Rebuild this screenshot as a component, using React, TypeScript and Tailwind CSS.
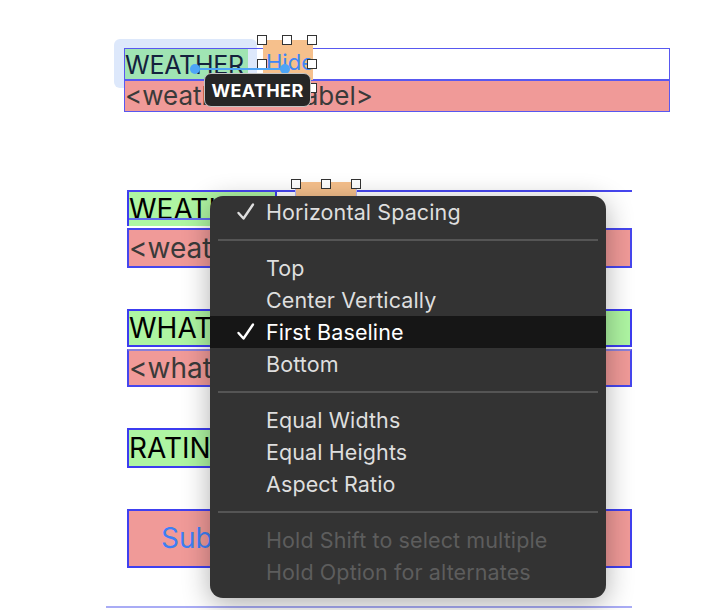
import React from 'react';

const font = { fontFamily: 'Inter, "Noto Sans", sans-serif' };

// selection frame with 8 resize handles, placed over the canvas
function SelectionHandles({ className, bottom = true }: { className: string; bottom?: boolean }) {
  const h = 'absolute w-[10px] h-[10px] bg-white border-[1.5px] border-[#333]';
  return (
    <div className={'absolute pointer-events-none ' + className}>
      <div className={h + ' -left-[5px] -top-[5px]'} />
      <div className={h + ' left-1/2 -ml-[5px] -top-[5px]'} />
      <div className={h + ' -right-[5px] -top-[5px]'} />
      {bottom && (
        <>
          <div className={h + ' -left-[5px] top-1/2 -mt-[5px]'} />
          <div className={h + ' -right-[5px] top-1/2 -mt-[5px]'} />
          <div className={h + ' -left-[5px] -bottom-[5px]'} />
          <div className={h + ' left-1/2 -ml-[5px] -bottom-[5px]'} />
          <div className={h + ' -right-[5px] -bottom-[5px]'} />
        </>
      )}
    </div>
  );
}

type Item = { label: string; checked?: boolean; active?: boolean; disabled?: boolean } | 'sep';

const items: Item[] = [
  { label: 'Horizontal Spacing', checked: true },
  'sep',
  { label: 'Top' },
  { label: 'Center Vertically' },
  { label: 'First Baseline', checked: true, active: true },
  { label: 'Bottom' },
  'sep',
  { label: 'Equal Widths' },
  { label: 'Equal Heights' },
  { label: 'Aspect Ratio' },
  'sep',
  { label: 'Hold Shift to select multiple', disabled: true },
  { label: 'Hold Option for alternates', disabled: true },
];

function Menu() {
  return (
    <div className="absolute left-[210px] top-[196px] w-[396px] pb-[10px] bg-[#333333] rounded-[13px] shadow-[0_6px_28px_rgba(0,0,0,0.32)] z-30 overflow-hidden">
      {items.map((it, i) =>
        it === 'sep' ? (
          <div key={i} className="h-[24px] flex items-center px-[8px]">
            <div className="h-[2px] w-full bg-[#555555]" />
          </div>
        ) : (
          <div
            key={i}
            className={
              'h-[32px] flex items-center text-[21.5px] tracking-[0.005em] ' +
              (it.active ? 'bg-[#161616] text-white' : it.disabled ? 'text-[#5d5d5d]' : 'text-[#dedede]')
            }
          >
            <span className="w-[56px] flex justify-end pr-[10px]">
              {it.checked && (
                <svg width="20" height="20" viewBox="0 0 20 20">
                  <path d="M2.5 11 L7.5 16.5 L17 2.5" fill="none" stroke="currentColor" strokeWidth="2.4" strokeLinecap="round" strokeLinejoin="round" />
                </svg>
              )}
            </span>
            <span>{it.label}</span>
          </div>
        )
      )}
    </div>
  );
}

export default function App() {
  return (
    <div className="relative w-[714px] h-[610px] bg-white overflow-hidden" style={font}>
      {/* selection highlight */}
      <div className="absolute left-[114px] top-[39px] w-[143px] h-[49px] bg-[#dde8fb] rounded-[6px]" />

      {/* top stack */}
      <div className="relative pt-[48px] pl-[124px]">
        <div className="relative w-[546px] h-[32px] border-[1.5px] border-[#5858f0] flex">
          <div className="w-[123px] h-full bg-[#a0e4b3] text-[25px] leading-[32px] tracking-[-0.01em] text-[#14213d] overflow-hidden whitespace-nowrap">
            WEATHER
          </div>
          <div className="ml-[15px] -mt-[9px] w-[50px] h-[40px] bg-[#f6c08c] text-[22px] leading-[44px] text-[#3f86f5] pl-[3px] overflow-hidden whitespace-nowrap">
            Hide
          </div>
        </div>
        <div className="w-[546px] h-[32px] bg-[#f09a98] border-[1.5px] border-[#5858f0] text-[26px] leading-[29px] text-[#3a3a3a] whitespace-nowrap overflow-hidden">
          &lt;weatherInfoLabel&gt;
        </div>
      </div>

      <SelectionHandles className="left-[262px] top-[40px] w-[50px] h-[48px] z-10" />

      {/* spacing guide */}
      <div className="absolute left-[190px] top-[64px] w-[100px] h-[10px] flex items-center z-10">
        <div className="w-[10px] h-[10px] rounded-full bg-[#4ea5f7]" />
        <div className="flex-1 h-[2px] bg-[#4ea5f7]" />
        <div className="w-[10px] h-[10px] rounded-full bg-[#4ea5f7]" />
      </div>

      {/* tooltip */}
      <div className="absolute left-[204px] top-[73px] w-[107px] h-[34px] z-20 bg-[#262626] border-[1.5px] border-[#c4c4c4] rounded-[7px] flex items-center justify-center text-white text-[18px] font-bold tracking-[0.02em]">
        WEATHER
      </div>

      {/* lower stacks */}
      <div className="relative pl-[127px] mt-[78px] w-[632px] flex flex-col">
        {/* weather */}
        <div className="h-[36px] border-t-2 border-[#4646ee] flex">
          <div className="relative w-[150px] h-full bg-[#aef5a2] border-x-2 border-[#3c3cf0] text-[28px] leading-[34px] text-black whitespace-nowrap overflow-hidden">
            WEATHER
            <div className="absolute inset-x-0 top-[26px] h-[1.5px] bg-[#5f6df0]" />
          </div>
          <div className="relative ml-[18px] -mt-[10px] w-[62px] h-[46px] bg-[#f6c08c] border-x border-[#b9b9f5]">
            <SelectionHandles className="inset-x-0 top-[2px] h-[40px]" bottom={false} />
          </div>
        </div>
        <div className="mt-[2px] h-[40px] bg-[#f09a98] border-2 border-[#4646ee] text-[28px] leading-[36px] text-[#3a3a3a] whitespace-nowrap overflow-hidden">
          &lt;weatherLabel&gt;
        </div>

        {/* what */}
        <div className="mt-[41px] h-[38px] bg-[#aef5a2] border-2 border-[#3c3cf0] text-[28px] leading-[34px] text-black whitespace-nowrap overflow-hidden">
          WHAT
        </div>
        <div className="mt-[2px] h-[38px] bg-[#f09a98] border-2 border-[#4646ee] border-t-[#8a7fd8] text-[28px] leading-[34px] text-[#3a3a3a] whitespace-nowrap overflow-hidden">
          &lt;whatLabel&gt;
        </div>

        {/* rating */}
        <div className="mt-[41px] w-[150px] h-[40px] bg-[#aef5a2] border-2 border-[#3c3cf0] text-[28px] leading-[36px] text-black whitespace-nowrap overflow-hidden">
          RATING
        </div>

        {/* submit */}
        <div className="mt-[41px] h-[59px] bg-[#f09a98] border-2 border-[#4040f0] text-[28px] leading-[55px] text-[#3d7ff5] pl-[32px] whitespace-nowrap overflow-hidden">
          Submit
        </div>

        <div className="mt-[38px] -ml-[21px] h-[2px] bg-[#a9acf5]" />
      </div>

      <Menu />
    </div>
  );
}
